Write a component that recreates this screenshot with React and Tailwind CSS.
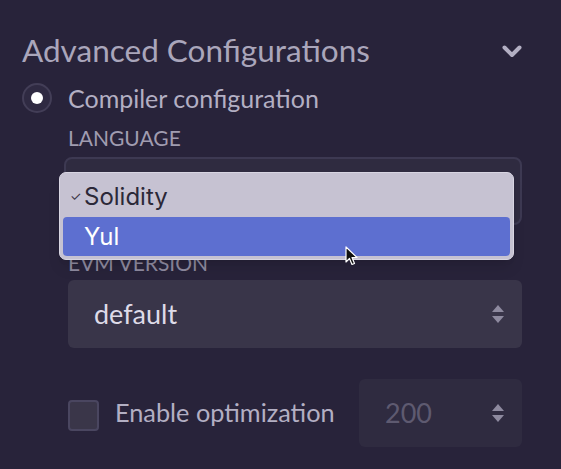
export default function App() {
  return (
    <div className="relative h-[469px] w-[561px] overflow-hidden bg-[#28233a] pl-[22px] pr-[39px] pt-[30px]" style={{ fontFamily: "Lato, 'Noto Sans', sans-serif" }}>
      <div className="flex items-center justify-between">
        <h2 className="text-[31.5px] leading-[40px] text-[#aaa6bb]">Advanced Configurations</h2>
        <svg width="20" height="13" viewBox="0 0 20 13" className="mt-[2px]">
          <path d="M2.5 2.5 L10 10 L17.5 2.5" fill="none" stroke="#b3afc3" strokeWidth="4" strokeLinecap="round" strokeLinejoin="round" />
        </svg>
      </div>

      <div className="mt-[13px] flex items-center gap-[16px]">
        <div className="flex h-[30px] w-[30px] items-center justify-center rounded-full border-2 border-[#433e57] bg-[#2f2a42]">
          <div className="h-[12px] w-[12px] rounded-full bg-white" />
        </div>
        <span className="text-[25px] leading-[30px] text-[#b3afc3]">Compiler configuration</span>
      </div>

      <div className="pl-[46px]">
        <div className="mt-[13px] text-[21px] leading-[24px] text-[#a09cb0]">LANGUAGE</div>

        <div className="relative -ml-[4px] mt-[7px]">
          <div className="h-[68px] rounded-[8px] border-2 border-[#3d3952] bg-[#2f2b40]" />
          <div className="absolute left-[-5px] top-[15px] w-[455px] rounded-[7px] border border-[#d8d5e2] bg-[#c6c2d2] p-[3px] shadow-lg" style={{ fontFamily: "Inter, 'Liberation Sans', sans-serif" }}>
            <div className="flex h-[41px] items-center text-[24px] text-[#2b2838]">
              <span className="w-[21px] pl-[7px] text-[13px] text-[#3a3648]">✓</span>
              <span>Solidity</span>
            </div>
            <div className="flex h-[39px] items-center rounded-[4px] bg-[#5d6fd0] pl-[21px] text-[24px] text-white">Yul</div>
          </div>
        </div>

        <div className="mt-[26px] text-[21px] leading-[24px] text-[#8e8a9f]">EVM VERSION</div>

        <div className="mt-[5px] flex h-[68px] items-center justify-between rounded-[6px] bg-[#393549] pl-[26px] pr-[17px]">
          <span className="text-[27px] text-[#dedbe8]">default</span>
          <Updown />
        </div>

        <div className="mt-[31px] flex items-center">
          <div className="mt-[4px] h-[31px] w-[31px] rounded-[4px] border-2 border-[#4a4660] bg-[#3a3649]" />
          <span className="ml-[16px] text-[25.3px] text-[#b3afc3]">Enable optimization</span>
          <div className="ml-auto flex h-[68px] w-[163px] items-center justify-between rounded-[6px] bg-[#2f2b40] pl-[26px] pr-[17px]">
            <span className="text-[27px] text-[#5e5a70]">200</span>
            <Updown />
          </div>
        </div>
      </div>

      <svg width="16" height="22" viewBox="0 0 16 22" className="absolute left-[345px] top-[246px]">
        <path d="M1 1 L1 16 L4.5 12.5 L7 18.5 L9.5 17.5 L7 11.5 L12 11.5 Z" fill="#111" stroke="#fff" strokeWidth="1.2" strokeLinejoin="round" />
      </svg>
    </div>
  );
}

function Updown() {
  return (
    <svg width="14" height="22" viewBox="0 0 14 22">
      <path d="M7 2 L13 9 L1 9 Z" fill="#8e8a9f" />
      <path d="M7 20 L13 13 L1 13 Z" fill="#8e8a9f" />
    </svg>
  );
}
